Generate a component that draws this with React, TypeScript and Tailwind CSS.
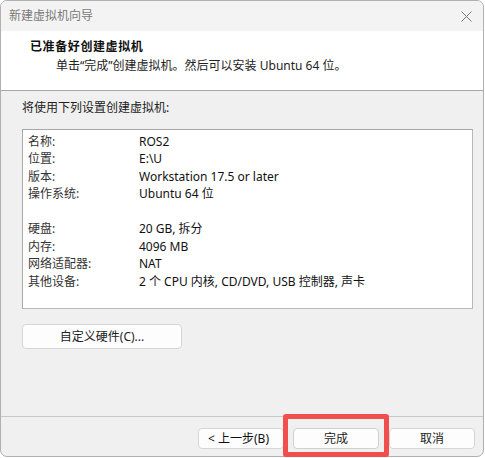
import React from "react";

const rows: ([string, string] | null)[] = [
  ["名称:", "ROS2"],
  ["位置:", "E:\\U"],
  ["版本:", "Workstation 17.5 or later"],
  ["操作系统:", "Ubuntu 64 位"],
  null,
  ["硬盘:", "20 GB, 拆分"],
  ["内存:", "4096 MB"],
  ["网络适配器:", "NAT"],
  ["其他设备:", "2 个 CPU 内核, CD/DVD, USB 控制器, 声卡"],
];

export default function App() {
  return (
    <div className="relative w-[485px] h-[458px] bg-white font-['Segoe_UI','Noto_Sans','Noto_Sans_CJK_SC',sans-serif] text-[12px] text-[#1a1a1a]">
      <div className="flex flex-col w-[484px] h-[457px] rounded-[7px] border border-[#b0b0b0] overflow-hidden bg-[#f0f0f0]">
        {/* title bar */}
        <div className="flex items-center justify-between h-[30px] shrink-0 bg-[#f3f3f3] pl-[8px] pr-[11px]">
          <span className="text-[12px] text-[#7a7a7a] leading-none">新建虚拟机向导</span>
          <svg width="11" height="11" viewBox="0 0 11 11" className="mt-[1px]">
            <path d="M0.5 0.5 L10.5 10.5 M10.5 0.5 L0.5 10.5" stroke="#7a7a7a" strokeWidth="1" fill="none" />
          </svg>
        </div>
        {/* header */}
        <div className="h-[60px] shrink-0 bg-white border-b border-[#a8a8a8] pt-[7px]">
          <div className="pl-[29px] font-bold tracking-[0.6px] leading-[18px] text-[#111]">已准备好创建虚拟机</div>
          <div className="pl-[55px] leading-[18px] mt-[1px] text-[#222]">
            单击“完成”创建虚拟机。然后可以安装 Ubuntu 64 位。
          </div>
        </div>
        {/* body */}
        <div className="flex-1 flex flex-col pl-[21px] pt-[9px]">
          <div className="leading-[16px] text-[#222]">将使用下列设置创建虚拟机:</div>
          <div className="mt-[13px] w-[451px] h-[180px] bg-white border border-[#b8b8b8] border-t-[#a8a8a8] border-l-[#a8a8a8] pt-[3px] pl-[5px]">
            {rows.map((r, i) =>
              r ? (
                <div key={i} className="flex h-[17.5px] items-center leading-none">
                  <span className="w-[111px] text-[#333]">{r[0]}</span>
                  <span className="text-[#111]">{r[1]}</span>
                </div>
              ) : (
                <div key={i} className="h-[17.5px]" />
              )
            )}
          </div>
          <button className="mt-[15px] w-[160px] h-[25px] rounded-[4px] border border-[#d6d6d6] bg-[#fdfdfd] text-[12px] text-[#222] flex items-center justify-center">
            自定义硬件(C)...
          </button>
        </div>
        {/* footer */}
        <div className="h-[40px] shrink-0 border-t border-[#c8c8c8] flex items-start pt-[11px] pl-[197px]">
          <button className="w-[86px] h-[21px] rounded-[4px] border border-[#d6d6d6] bg-[#fdfdfd] flex items-center justify-start pl-[9px] text-[#111]">
            &lt; 上一步(B)
          </button>
          <button className="ml-[9px] w-[86px] h-[21px] rounded-[4px] border border-[#d0d0d0] bg-[#fdfdfd] flex items-center justify-center text-[#222]">
            完成
          </button>
          <button className="ml-[10px] w-[86px] h-[21px] rounded-[4px] border border-[#d6d6d6] bg-[#fdfdfd] flex items-center justify-center text-[#222]">
            取消
          </button>
        </div>
      </div>
      {/* red highlight */}
      <div className="absolute left-[283px] top-[414px] w-[106px] h-[43px] border-[5px] border-[#f24e4e] rounded-[3px]" />
    </div>
  );
}
